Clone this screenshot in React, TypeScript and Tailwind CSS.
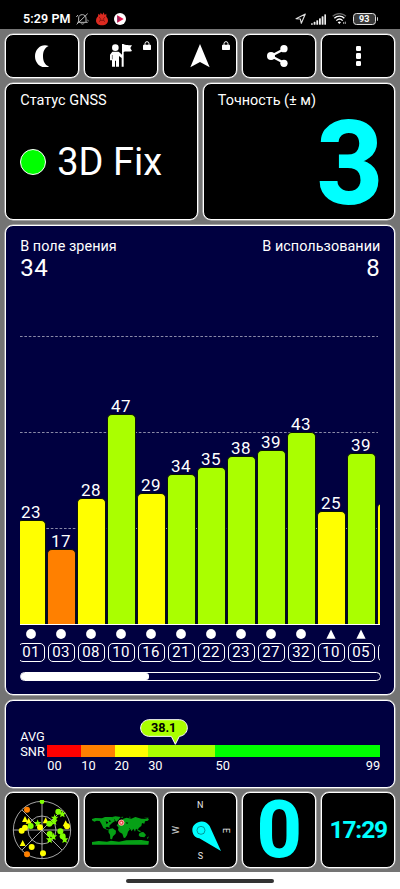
import React from 'react';

type Sat = { id: string; snr: number; height: number; color: string; shape: 'dot' | 'tri' };

const YELLOW = '#ffff00';
const ORANGE = '#ff8000';
const LIME = '#aaff00';
const GREEN = '#80ff00';

const sats: Sat[] = [
  { id: '01', snr: 23, height: 104, color: YELLOW, shape: 'dot' },
  { id: '03', snr: 17, height: 75, color: ORANGE, shape: 'dot' },
  { id: '08', snr: 28, height: 126, color: YELLOW, shape: 'dot' },
  { id: '10', snr: 47, height: 209.5, color: LIME, shape: 'dot' },
  { id: '16', snr: 29, height: 130.5, color: YELLOW, shape: 'dot' },
  { id: '21', snr: 34, height: 150, color: LIME, shape: 'dot' },
  { id: '22', snr: 35, height: 157, color: LIME, shape: 'dot' },
  { id: '23', snr: 38, height: 167.5, color: LIME, shape: 'dot' },
  { id: '27', snr: 39, height: 173.5, color: LIME, shape: 'dot' },
  { id: '32', snr: 43, height: 191.5, color: LIME, shape: 'dot' },
  { id: '10', snr: 25, height: 112.5, color: YELLOW, shape: 'tri' },
  { id: '05', snr: 39, height: 171, color: LIME, shape: 'tri' },
];

const Panel: React.FC<{ className?: string; children: React.ReactNode }> = ({ className = '', children }) => (
  <div className={`rounded-[8px] border border-white shadow-[0_0_0_0.5px_#d0d0d0] ${className}`}>{children}</div>
);

const Lock = () => (
  <svg viewBox="0 0 24 27" className="absolute right-[6px] top-[6.5px] h-[9px] w-[8px]">
    <path d="M6 13V8a6 6 0 0 1 12 0v5" fill="none" stroke="#fff" strokeWidth="3" />
    <rect x="0" y="11" width="24" height="16" rx="2" fill="#fff" />
  </svg>
);

const StatusBar = () => (
  <div className="flex h-[29px] items-center justify-between bg-black pl-[23px] pr-[22px] pt-[9px]">
    <div className="flex items-center">
      <span className="w-[47px] whitespace-nowrap text-[12.5px] font-semibold leading-none tracking-[0.1px]">5:29 PM</span>
      {/* muted bell */}
      <svg viewBox="0 0 39 36" className="ml-[6px] h-[12px] w-[13px]" fill="none" stroke="#bbb" strokeWidth="3">
        <path d="M8 27V15C8 8 13 5 19 5s11 4 11 10v12M4 28h31M15 31c1 3 8 3 9 0M2 34L35 2M1 12l5-6M38 24l-4-3" />
      </svg>
      {/* antutu flame */}
      <svg viewBox="0 0 36 40" className="ml-[6.5px] h-[13.3px] w-[12px]">
        <path d="M6 13L7 5l5 4 2-7 5 6 4-7 3 8 5-4v9c4 4 5 8 5 12 0 8-8 14-18 14S0 34 0 26c0-5 2-9 6-13z" fill="#dc2a20" />
        <path d="M9 16l5 4M27 16l-5 4M9 29c5-6 13-6 18 0M13 22v3M23 22v3" stroke="#6e100c" strokeWidth="2.5" fill="none" />
      </svg>
      <svg viewBox="0 0 36 36" className="ml-[6.5px] h-[12px] w-[12px]">
        <circle cx="18" cy="18" r="18" fill="#fff" />
        <path d="M10 7l19 11-19 11z" fill="#e5144b" />
        <path d="M10 7l8 11-8 11z" fill="#8d2458" />
      </svg>
    </div>
    <div className="flex items-center">
      <svg viewBox="0 0 34 34" className="h-[11.3px] w-[11.3px]">
        <path d="M3 17L31 3 19 31l-3-13z" fill="none" stroke="#ddd" strokeWidth="3.4" strokeLinejoin="round" />
      </svg>
      <svg viewBox="0 0 45 32" className="ml-[4.5px] h-[11px] w-[15px]" fill="#eee">
        <rect x="0" y="27" width="5.5" height="5" rx="2" />
        <rect x="8" y="23" width="5.5" height="9" rx="2" />
        <rect x="16" y="18" width="5.5" height="14" rx="2" />
        <rect x="24" y="12" width="5.5" height="20" rx="2" />
        <rect x="32" y="6" width="5.5" height="26" rx="2" />
        <rect x="40" y="0" width="5" height="32" rx="2" />
      </svg>
      <svg viewBox="0 0 45 34" className="ml-[6px] h-[11.3px] w-[15px]" fill="none">
        <path d="M2 10C13-1 31-1 42 10" stroke="#666" strokeWidth="4" />
        <path d="M7 16C16 7 29 7 37 16M13 23c6-6 13-6 19 0" stroke="#fff" strokeWidth="4" />
        <path d="M17 28c3-3 7-3 10 0l-5 5z" fill="#fff" />
        <path d="M35 33v-6M40 26v7" stroke="#aaa" strokeWidth="3" />
      </svg>
      <div className="ml-[6px] flex h-[12px] w-[22.5px] items-center justify-center rounded-[3.5px] border border-[#e0e0e0] bg-[#3a3a3a]">
        <span className="text-[9px] font-bold leading-none">93</span>
      </div>
      <div className="ml-[1px] h-[4px] w-[1.5px] rounded-r bg-[#ccc]" />
    </div>
  </div>
);

const Toolbar = () => (
  <div className="grid h-[44.5px] grid-cols-5 gap-[4.7px]">
    <Panel className="flex items-center justify-center bg-black">
      <svg viewBox="0 0 42 68" className="h-[22.7px] w-[14px]">
        <path d="M41 3C28 9 24 20 24 34s5 26 18 31C20 73 0 57 0 34S20-5 41 3z" fill="#fff" />
      </svg>
    </Panel>
    <Panel className="relative flex items-center justify-center bg-black">
      <svg viewBox="0 0 66 70" className="h-[23.3px] w-[22px]" fill="#fff">
        <circle cx="16" cy="11" r="10" />
        <path d="M7 23h19l10 9V0h5v1c9 4 14 2 25 3l-5 8 5 9c-10 4-17-1-25 3v44h-6V42l-8-6v32h-9V50h-3v18H6V49H0V32z" />
        <path d="M7 33v13" stroke="#000" strokeWidth="1.5" />
      </svg>
      <Lock />
    </Panel>
    <Panel className="relative flex items-center justify-center bg-black">
      <svg viewBox="0 0 60 72" className="h-[24px] w-[20px]">
        <path d="M30 0l29 70-29-16L1 70z" fill="#fff" />
      </svg>
      <Lock />
    </Panel>
    <Panel className="flex items-center justify-center bg-black">
      <svg viewBox="0 0 64 66" className="mr-[3px] h-[22px] w-[21.3px]">
        <path d="M52 12L12 33l40 21" fill="none" stroke="#fff" strokeWidth="7" />
        <circle cx="51" cy="11" r="11" fill="#fff" />
        <circle cx="12" cy="33" r="12" fill="#fff" />
        <circle cx="51" cy="55" r="11" fill="#fff" />
      </svg>
    </Panel>
    <Panel className="flex flex-col items-center justify-center gap-[2.5px] bg-black">
      <div className="h-[5.2px] w-[5.2px] rounded-[1.3px] bg-white" />
      <div className="h-[5.2px] w-[5.2px] rounded-[1.3px] bg-white" />
      <div className="h-[5.2px] w-[5.2px] rounded-[1.3px] bg-white" />
    </Panel>
  </div>
);

const SatChart = () => (
  <Panel className="flex h-[470.5px] flex-col bg-[#000040] px-[14px] pt-[12px]">
    <div className="flex justify-between text-[14.4px] leading-[17px] tracking-[0.05px]">
      <span>В поле зрения</span>
      <span>В использовании</span>
    </div>
    <div className="flex justify-between text-[24px] leading-[27px] tracking-[0.6px]">
      <span>34</span>
      <span>8</span>
    </div>
    <div className="relative mt-[42px] h-[301px] w-[360px] overflow-hidden border-b border-white">
      {/* grid lines every 96px */}
      <svg className="absolute inset-0 h-full w-full" stroke="#8a8aa8" strokeWidth="1" strokeDasharray="2.6 1.8">
        <path d="M0 12.5H358M0 108.5H358M0 204.5H358" />
      </svg>
      <div className="relative -ml-[4.2px] flex h-full w-[400px] items-end">
        {sats.map((s, i) => (
          <div key={i} className="flex w-[30px] shrink-0 flex-col items-center">
            <span className="text-[17px] leading-[16px] tracking-[0.5px]">{s.snr}</span>
            <div
              className="w-[29px] rounded-t-[5px] border-x border-t border-[#0a1408]"
              style={{ height: s.height, backgroundColor: s.color }}
            />
          </div>
        ))}
        <div className="ml-[0.5px] h-[121px] w-[29px] shrink-0 rounded-t-[5px] border-x border-t border-[#0a1408] bg-[#ffff00]" />
      </div>
    </div>
    <div className="h-[39px] w-[360px] overflow-hidden">
      <div className="-ml-[4.2px] flex w-[400px]">
        {sats.map((s, i) => (
          <div key={i} className="flex w-[30px] shrink-0 flex-col items-center">
            <svg viewBox="0 0 10 10" className="mt-[4px] h-[10px] w-[10px]" fill="#fff">
              {s.shape === 'dot' ? <circle cx="5" cy="5" r="4.9" /> : <path d="M5 .5l4.6 9.2H.4z" />}
            </svg>
            <div className="mt-[4px] flex h-[19px] w-[27px] items-center justify-center rounded-[5px] border border-white pt-px text-[15px] leading-none tracking-[0.4px]">
              {s.id}
            </div>
          </div>
        ))}
        <div className="ml-[1.5px] mt-[18px] h-[19px] w-[27px] shrink-0 rounded-[5px] border border-white" />
      </div>
    </div>
    <div className="mt-[8px] h-[9px] w-[361px] rounded-full border border-white">
      <div className="h-full w-[128px] rounded-[3px] bg-white" />
    </div>
  </Panel>
);

const SnrScale = () => (
  <Panel className="flex h-[88px] bg-[#000040] pl-[14px] pt-[28px]">
    <div className="w-[27px] text-[12.8px] leading-[15.5px]">
      <div>AVG</div>
      <div>SNR</div>
    </div>
    <div className="relative w-[333px] pt-[16px]">
      <div className="flex h-[12.5px]">
        <div className="w-[33.7px] bg-[#ff0000]" />
        <div className="w-[33.7px] bg-[#ff8000]" />
        <div className="w-[33.6px] bg-[#ffff00]" />
        <div className="w-[67.3px] bg-[#aaff00]" />
        <div className="flex-1 bg-[#00ff00]" />
      </div>
      <div className="flex text-[12.8px] leading-[17px]">
        <span className="w-[34px]">00</span>
        <span className="w-[33.4px]">10</span>
        <span className="w-[33.6px]">20</span>
        <span className="w-[67.3px]">30</span>
        <span className="flex-1">50</span>
        <span>99</span>
      </div>
      {/* average marker */}
      <svg viewBox="0 0 144 80" className="absolute left-[92.5px] top-[-10px] h-[26.7px] w-[48px]">
        <path
          d="M26 2h92c32 2 32 46 0 50l-12 24-12-24H26C-6 48-6 6 26 2z"
          fill="#aaff00"
          stroke="#fff"
          strokeWidth="3"
        />
        <text x="71" y="40" textAnchor="middle" fontSize="38" fontWeight="700" fill="#000">38.1</text>
      </svg>
    </div>
  </Panel>
);

// [x, y, color, shape]
const radar: [number, number, string, 'o' | 't' | 's'][] = [
  [126, 41, GREEN, 'o'], [81, 65, ORANGE, 'o'], [81, 199, ORANGE, 'o'],
  [75, 94, YELLOW, 't'], [86, 99, YELLOW, 't'], [68, 166, YELLOW, 't'], [137, 98, YELLOW, 't'],
  [65, 128, YELLOW, 'o'], [75, 119, YELLOW, 'o'], [95, 177, YELLOW, 'o'], [129, 196, YELLOW, 'o'],
  [92, 114, GREEN, 'o'], [113, 106, GREEN, 's'],
  [120, 118, YELLOW, 'o'], [148, 107, GREEN, 'o'], [164, 90, GREEN, 's'], [162, 101, GREEN, 's'],
  [175, 71, GREEN, 'o'], [187, 78, GREEN, 's'], [197, 107, YELLOW, 't'], [201, 115, YELLOW, 'o'],
  [181, 130, GREEN, 'o'], [188, 145, GREEN, 'o'], [194, 155, GREEN, 's'],
  [149, 138, GREEN, 'o'], [160, 146, GREEN, 's'], [149, 155, GREEN, 's'],
];

const starPath = 'M0-12L3-4 11-4 5 2 7 10 0 6-7 10-5 2-11-4-3-4Z';

const Radar = () => (
  <svg viewBox="36 36 180 180" className="h-[60px] w-[60px]">
    <g fill="none" stroke="#c4c4c4" strokeWidth="2.5">
      <circle cx="126" cy="126" r="86" />
      <circle cx="126" cy="126" r="42" />
      <path d="M40 126h172M126 40v172M66 66l120 120M186 66L66 186" />
    </g>
    {radar.map(([x, y, c, s], i) => (
      <g key={i} transform={`translate(${x} ${y})`} fill={c}>
        {s === 'o' && <circle r={y === 41 ? 7 : 9} />}
        {s === 't' && <path d="M0-10L9 8H-9Z" />}
        {s === 's' && <path d={starPath} />}
      </g>
    ))}
  </svg>
);

const WorldMap = () => (
  <svg viewBox="274 82 180 90" className="h-[30px] w-[60px]">
    <g fill="#06a016">
      <path d="M277 94l10-3 20 1 9-4h20l4 4 6-3-3 9 5 1-8 5-6 5-5 5 1 6-8-3-5 3 4 5 8 1 3 4-9-3-12-6-6-13-5-8-9-1-7 3-7-4z" />
      <path d="M335 89l12-3 16 2-6 8-7 6-7-9z" />
      <path d="M329 124l10-2 10 7-1 9-8 8-3 9-5-1-1-13-5-8z" />
      <path d="M361 102l10-9 10-3 14 3 12-5 18 5 23 1-3 5-9 2-2 7-7-2-2 9-8 6-2 6-6-4-3 9-5-9-5 8-6-9-8-1-6 4-6-5-8-3-6 2-5-6z" />
      <path d="M357 116l17-1 13 5 4 5-6 7-3 11-6 8-4-1-4-12-8-4-5-7z" />
      <path d="M419 137l8-4 5 1 7 8-5 7-13-2-4-4zM411 126l7 2 7 3-6 2zM442 150l6-4-4 8z" />
      <path d="M277 163l20-3 25 2 12-3 24 3 22-4 45-1 23 4-2 10H277z" />
      <path d="M363 88l8-1-3 4zM388 87l6 1-4 2zM433 90h14l-2 4z" />
    </g>
    <path d="M318 101l8 3-5 6zM329 97l6 4-7 2zM378 104l8 1-4 4z" fill="#000" />
    <circle cx="365" cy="105" r="8" fill="#f04040" stroke="#ffb0b0" strokeWidth="3" />
    <circle cx="365" cy="105" r="3" fill="#ffd8d8" />
  </svg>
);

const Compass = () => (
  <svg viewBox="1 3 220 222" className="h-[74px] w-[73.3px] shrink-0">
    <g fill="#e8e8e8" fontSize="27" textAnchor="middle">
      <text x="110" y="48">N</text>
      <text x="110" y="201">S</text>
      <text transform="translate(177 116) rotate(90)">E</text>
      <text transform="translate(45 114) rotate(-90)">W</text>
    </g>
    <path d="M86 114c0-24 36-37 52-12l34 75-65-38c-12-1-21-12-21-25z" fill="#00ffff" />
    <circle cx="112" cy="115" r="12" fill="none" stroke="#066" strokeWidth="2" />
  </svg>
);

export default function App() {
  return (
    <div className="flex h-[889px] w-[400px] flex-col overflow-hidden bg-white font-['Roboto',sans-serif] text-white">
      <StatusBar />
      <div className="flex h-[843px] shrink-0 flex-col gap-[4.5px] bg-[#747474] pl-[5.2px] pr-[4.6px] pt-[4.8px]">
        <Toolbar />
        <div className="grid h-[137.5px] grid-cols-2 grid-rows-1 gap-[5px]">
          <Panel className="bg-black pl-[14px] pt-[8px]">
            <div className="text-[14.5px] leading-[17px]">Статус GNSS</div>
            <div className="mt-[29px] flex items-center">
              <div className="h-[26px] w-[26px] rounded-full border border-white bg-[#00ff00]" />
              <span className="ml-[11px] text-[38px] leading-[48px]">3D Fix</span>
            </div>
          </Panel>
          <Panel className="bg-black pl-[14px] pr-[11px] pt-[8px]">
            <div className="text-[14.4px] leading-[17px]">Точность (± м)</div>
            <div className="pt-[10px] text-right text-[116px] font-extrabold leading-[90px] text-[#00ffff]">3</div>
          </Panel>
        </div>
        <SatChart />
        <SnrScale />
        <div className="grid h-[76px] grid-cols-5 grid-rows-1 gap-[4.7px]">
          <Panel className="flex items-center justify-center bg-black">
            <Radar />
          </Panel>
          <Panel className="flex items-center justify-center bg-black">
            <WorldMap />
          </Panel>
          <Panel className="flex items-center justify-center overflow-hidden bg-black">
            <Compass />
          </Panel>
          <Panel className="flex items-center justify-center bg-black text-[79px] font-extrabold leading-[76px] text-[#00ffff]">
            <span>0</span>
          </Panel>
          <Panel className="flex items-center justify-center bg-black text-[24.5px] font-bold leading-none tracking-[-1.1px] text-[#00ffff]">
            <span>17:29</span>
          </Panel>
        </div>
      </div>
      <div className="flex justify-center pt-[6.5px]">
        <div className="h-[4px] w-[148px] rounded-full bg-[#333]" />
      </div>
    </div>
  );
}
